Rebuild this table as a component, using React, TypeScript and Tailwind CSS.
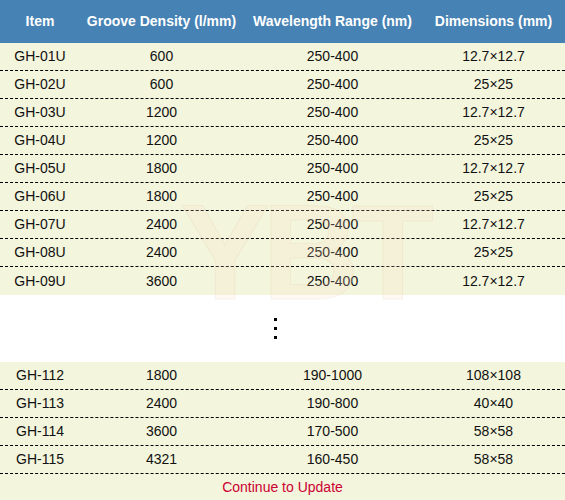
const TOP_ROWS = [
  ["GH-01U", "600", "250-400", "12.7×12.7"],
  ["GH-02U", "600", "250-400", "25×25"],
  ["GH-03U", "1200", "250-400", "12.7×12.7"],
  ["GH-04U", "1200", "250-400", "25×25"],
  ["GH-05U", "1800", "250-400", "12.7×12.7"],
  ["GH-06U", "1800", "250-400", "25×25"],
  ["GH-07U", "2400", "250-400", "12.7×12.7"],
  ["GH-08U", "2400", "250-400", "25×25"],
  ["GH-09U", "3600", "250-400", "12.7×12.7"],
];

const BOTTOM_ROWS = [
  ["GH-112", "1800", "190-1000", "108×108"],
  ["GH-113", "2400", "190-800", "40×40"],
  ["GH-114", "3600", "170-500", "58×58"],
  ["GH-115", "4321", "160-450", "58×58"],
];

const COLS = ["w-[80px]", "w-[163px]", "w-[179px]", "flex-1"];

function Row({ cells, last }: { cells: string[]; last?: boolean }) {
  return (
    <div
      className={`flex h-[28px] bg-[#f3f5dc] text-[14px] text-[#111] ${
        last ? "h-[27px]" : "border-b border-dashed border-black"
      }`}
    >
      {cells.map((c, i) => (
        <div key={i} className={`${COLS[i]} flex items-center justify-center`}>
          {c}
        </div>
      ))}
    </div>
  );
}

export default function App() {
  return (
    <div className="relative w-[565px] h-[500px] overflow-hidden bg-white font-['Liberation_Sans',Arial,sans-serif]">
      {/* header */}
      <div className="flex h-[43px] bg-[#4682b4] text-[14px] font-bold text-white">
        {["Item", "Groove Density (l/mm)", "Wavelength Range (nm)", "Dimensions (mm)"].map((h, i) => (
          <div key={h} className={`${COLS[i]} flex items-center justify-center`}>
            {h}
          </div>
        ))}
      </div>

      {TOP_ROWS.map((r, i) => (
        <Row key={r[0]} cells={r} last={i === TOP_ROWS.length - 1} />
      ))}

      {/* gap with vertical dots */}
      <div className="flex h-[67px] flex-col items-center justify-center gap-[6px] pr-[15px]">
        <div className="h-[3px] w-[3px] bg-black" />
        <div className="h-[3px] w-[3px] bg-black" />
        <div className="h-[3px] w-[3px] bg-black" />
      </div>

      {BOTTOM_ROWS.map((r) => (
        <Row key={r[0]} cells={r} />
      ))}
      <div className="flex h-[27px] items-center justify-center bg-[#f3f5dc] text-[14px] text-[#cc0033]">
        Continue to Update
      </div>

      {/* watermark */}
      <div className="pointer-events-none absolute left-[180px] top-[185px] text-[135px] font-bold leading-none tracking-[-8px] text-[rgba(255,222,200,0.2)] [-webkit-text-stroke:1px_rgba(215,190,160,0.16)]">
        YBT
      </div>
    </div>
  );
}
